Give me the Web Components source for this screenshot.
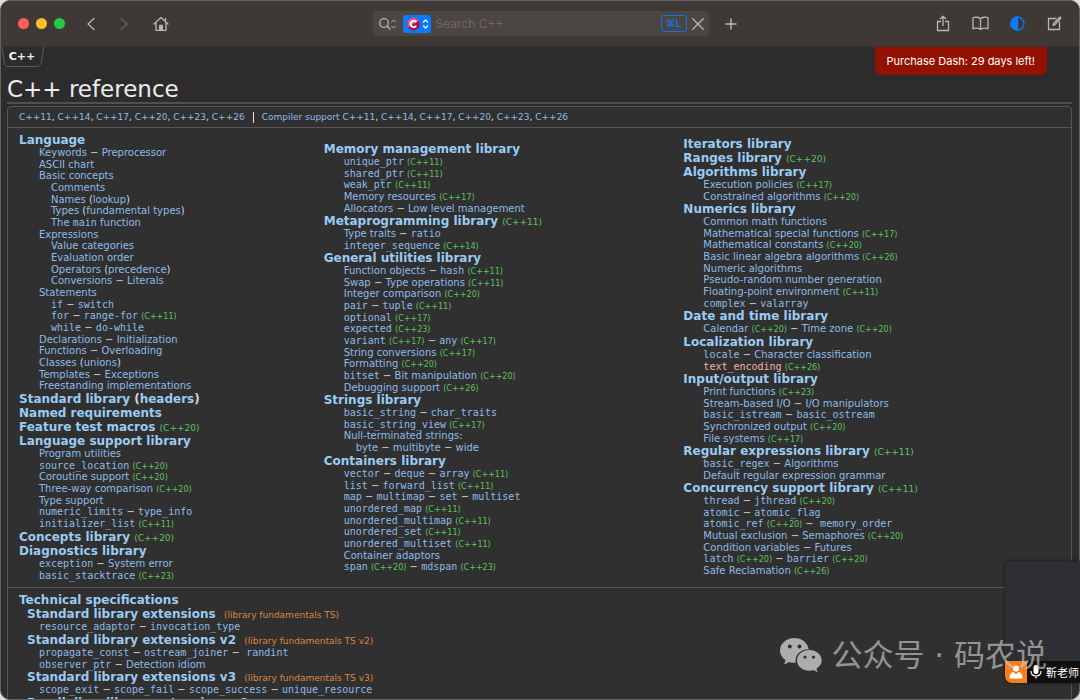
<!DOCTYPE html>
<html lang="en">
<head>
<meta charset="utf-8">
<title>C++ reference</title>
<style>
html { background: #dcdcdc; }
body { margin: 0; font-family: "DejaVu Sans", sans-serif; color: #e6e6e6; }
</style>
</head>
<body>
<dash-window>
  <tool-bar slot="bar"></tool-bar>
  <doc-tab slot="tab">C++</doc-tab>
  <purchase-banner slot="banner">Purchase Dash: 29 days left!</purchase-banner>
  <cpp-page>C++ reference</cpp-page>
</dash-window>
<call-tile>靳老师</call-tile>
<water-mark>公众号 · 码农说</water-mark>

<script>
const define = (name, html, setup) => customElements.define(name, class extends HTMLElement {
  constructor() {
    super();
    this.attachShadow({ mode: 'open' }).innerHTML = html;
    if (setup) setup(this.shadowRoot);
  }
});

define('dash-window', `
<style>
:host { display: flex; flex-direction: column; box-sizing: border-box; height: 100vh; overflow: hidden;
  border: 1px solid #626262; border-radius: 10px; background: #2c2c2c; position: relative; }
.top { display: flex; justify-content: space-between; align-items: flex-start; height: 29px; padding-right: 32px; }
</style>
<slot name="bar"></slot>
<div class="top"><slot name="tab"></slot><slot name="banner"></slot></div>
<slot></slot>`);

define('tool-bar', `
<style>
:host { display: flex; align-items: center; box-sizing: border-box; height: 46px; flex: none; background: #3f3936;
  border-bottom: 1px solid #352f2d; color: #b9b5b3; }
.side { flex: 1 1 0; display: flex; align-items: center; }
.left { padding-left: 17px; box-sizing: border-box; }
.end { flex-basis: 16px; }
.right { justify-content: flex-end; gap: 15px; padding-right: 14px; }
button { border: 0; padding: 0; background: none; color: inherit; display: flex; justify-content: center; align-items: center; font: inherit; }
.lights { display: flex; gap: 7px; margin-right: 14px; }
.lights button { width: 11px; height: 11px; border-radius: 50%; background: #ff5f57; }
.lights button:nth-child(2) { background: #febc2e; }
.lights button:nth-child(3) { background: #28c840; }
.nav { width: 24px; height: 24px; }
.fwd { margin-left: 9px; color: #67615f; }
.home { margin-left: 13px; }
svg { display: block; fill: none; stroke: currentColor; stroke-width: 1.3; stroke-linecap: round; stroke-linejoin: round; }
.field { display: flex; align-items: center; box-sizing: border-box; width: 336px; height: 25px; padding: 0 5px; border-radius: 4px; background: #4c4643; }
.doc { width: 28px; height: 18px; margin: 0 5px; border-radius: 3px; background: #087bfe; color: #fff; flex: none; }
input { flex: 1; min-width: 0; border: 0; padding: 0; background: none; outline: 0; color: #eee; font: 12px Inter, sans-serif; }
input::placeholder { color: #6e6865; opacity: 1; }
kbd { display: flex; align-items: center; justify-content: center; box-sizing: border-box; width: 26px; height: 17px; margin-right: 5px;
  border: 1px solid #0f75e8; border-radius: 3px; color: #0f75e8; font: 500 10px/15px Inter, "DejaVu Sans", sans-serif; }
.add { margin-left: 16px; }
.right button { width: 22px; height: 24px; }
</style>
<div class="side left">
  <div class="lights"><button aria-label="Close"></button><button aria-label="Minimise"></button><button aria-label="Zoom"></button></div>
  <button class="nav" aria-label="Back"><svg width="10" height="14"><path d="M8 1.500L2 7L8 12.500"/></svg></button>
  <button class="nav fwd" aria-label="Forward"><svg width="10" height="14"><path d="M2 1.500L8 7L2 12.500"/></svg></button>
  <button class="nav home" aria-label="Home"><svg width="16" height="16"><path d="M1 8L8 1.500L15 8M12.500 5.200V2.500M3 7V14.300H13V7"/><path d="M6.700 14V9.500H9.300V14Z" fill="currentColor"/></svg></button>
</div>
<search class="field">
  <svg width="20" height="16" aria-hidden="true"><circle cx="6" cy="7" r="4.300"/><path d="M9.200 10.200L12 13"/><path d="M13.500 6L15.500 4L17.500 6M13.500 10L15.500 12L17.500 10" stroke-width="1"/></svg>
  <button class="doc" aria-label="Choose docset"><svg width="26" height="16" stroke="none"><path d="M9.500 1L15.500 4.500V11.500L9.500 15L3.500 11.500V4.500Z" fill="#b0104a" stroke="none"/><path d="M9.500 1L15.500 4.500L9.500 8L3.500 11.500V4.500Z" fill="#dc5d86" stroke="none"/><path d="M12.200 6.200A3.100 3.100 0 1 0 12.200 9.800" stroke="#fff" stroke-width="1.900" stroke-linecap="butt"/><path d="M19.500 6L21.500 4L23.500 6M19.500 10L21.500 12L23.500 10" stroke="#fff" stroke-width="1.200"/></svg></button>
  <input type="text" placeholder="Search C++" aria-label="Search C++">
  <kbd>⌘L</kbd>
  <button aria-label="Clear"><svg width="12" height="12"><path d="M.7.7L11.300 11.300M11.300.7L.7 11.300"/></svg></button>
</search>
<div class="side end">
  <button class="add" aria-label="New tab"><svg width="12" height="12"><path d="M6 1V11M1 6H11" stroke-width="1.500"/></svg></button>
  <div class="side right">
    <button aria-label="Share"><svg width="14" height="17"><path d="M4.500 6.500H1.500V15.500H12.500V6.500H9.500M7 10.500V1.300M4.300 3.800L7 1.200L9.700 3.800"/></svg></button>
    <button aria-label="Bookmarks"><svg width="17" height="15"><path d="M8.500 2.800C7 1 3 .8 1 1.800V12.800C3 11.800 7 12 8.500 13.600C10 12 14 11.800 16 12.800V1.800C14 .8 10 1 8.500 2.800ZM8.500 2.800V13.500"/></svg></button>
    <button aria-label="Appearance" style="color:#087bfe"><svg width="15" height="15"><circle cx="7.500" cy="7.500" r="6.500"/><path d="M7.500 1A6.500 6.500 0 0 0 7.500 14Z" fill="currentColor"/></svg></button>
    <button aria-label="Annotate"><svg width="15" height="15"><path d="M9 2.500H1.500V13.500H12.500V6M6 9.300L6.500 7.500L13 1L14 2L7.700 8.700Z"/></svg></button>
  </div>
</div>`);

define('doc-tab', `
<style>
:host { display: block; }
button { position: relative; display: block; width: 42px; height: 20px; margin: 0; padding: 0 0 1px; border: 0; background: none; color: #f0f0f0; font: bold 11px/18px "DejaVu Sans", sans-serif; }
svg { position: absolute; inset: 0; fill: none; stroke: #5a5a5a; }
</style>
<button><svg width="44" height="20"><path d="M1 0L3 15Q3.500 19.500 7 19.500H35Q39.500 19.500 40.500 15L42.500 0"/></svg><slot></slot></button>`);

define('purchase-banner', `
<style>
:host { display: block; }
button { display: block; height: 28px; padding: 0 12px; border: 0; border-radius: 0 0 6px 6px; background: #921100; color: #fff; font: 11px/28px Inter, sans-serif; }
</style>
<button><slot></slot></button>`);

const left = [
  ['Language', `Keywords − Preprocessor
ASCII chart
Basic concepts
 Comments
 Names (lookup)
 Types (fundamental types)
 The \`main\` function
Expressions
 Value categories
 Evaluation order
 Operators (precedence)
 Conversions − Literals
Statements
 \`if\` − \`switch\`
 \`for\` − \`range-for\` (C++11)
 \`while\` − \`do-while\`
Declarations − Initialization
Functions − Overloading
Classes (unions)
Templates − Exceptions
Freestanding implementations`],
  ['Standard library (headers)'],
  ['Named requirements'],
  ['Feature test macros (C++20)'],
  ['Language support library', `Program utilities
\`source_location\` (C++20)
Coroutine support (C++20)
Three-way comparison (C++20)
Type support
\`numeric_limits\` − \`type_info\`
\`initializer_list\` (C++11)`],
  ['Concepts library (C++20)'],
  ['Diagnostics library', `\`exception\` − System error
\`basic_stacktrace\` (C++23)`]
];
const middle = [
  ['Memory management library', `\`unique_ptr\` (C++11)
\`shared_ptr\` (C++11)
\`weak_ptr\` (C++11)
Memory resources (C++17)
Allocators − Low level management`],
  ['Metaprogramming library (C++11)', `Type traits − \`ratio\`
\`integer_sequence\` (C++14)`],
  ['General utilities library', `Function objects − \`hash\` (C++11)
Swap − Type operations (C++11)
Integer comparison (C++20)
\`pair\` − \`tuple\` (C++11)
\`optional\` (C++17)
\`expected\` (C++23)
\`variant\` (C++17) − \`any\` (C++17)
String conversions (C++17)
Formatting (C++20)
\`bitset\` − Bit manipulation (C++20)
Debugging support (C++26)`],
  ['Strings library', `\`basic_string\` − \`char_traits\`
\`basic_string_view\` (C++17)
Null-terminated strings:
 byte − multibyte − wide`],
  ['Containers library', `\`vector\` − \`deque\` − \`array\` (C++11)
\`list\` − \`forward_list\` (C++11)
\`map\` − \`multimap\` − \`set\` − \`multiset\`
\`unordered_map\` (C++11)
\`unordered_multimap\` (C++11)
\`unordered_set\` (C++11)
\`unordered_multiset\` (C++11)
Container adaptors
\`span\` (C++20) − \`mdspan\` (C++23)`]
];
const right = [
  ['Iterators library'],
  ['Ranges library (C++20)'],
  ['Algorithms library', `Execution policies (C++17)
Constrained algorithms (C++20)`],
  ['Numerics library', `Common math functions
Mathematical special functions (C++17)
Mathematical constants (C++20)
Basic linear algebra algorithms (C++26)
Numeric algorithms
Pseudo-random number generation
Floating-point environment (C++11)
\`complex\` − \`valarray\``],
  ['Date and time library', `Calendar (C++20) − Time zone (C++20)`],
  ['Localization library', `\`locale\` − Character classification
!\`text_encoding\` (C++26)`],
  ['Input/output library', `Print functions (C++23)
Stream-based I/O − I/O manipulators
\`basic_istream\` − \`basic_ostream\`
Synchronized output (C++20)
File systems (C++17)`],
  ['Regular expressions library (C++11)', `\`basic_regex\` − Algorithms
Default regular expression grammar`],
  ['Concurrency support library (C++11)', `\`thread\` − \`jthread\` (C++20)
\`atomic\` − \`atomic_flag\`
\`atomic_ref\` (C++20) − \u00a0\`memory_order\`
Mutual exclusion − Semaphores (C++20)
Condition variables − Futures
\`latch\` (C++20) − \`barrier\` (C++20)
Safe Reclamation (C++26)`]
];
const specs = [
  ['Technical specifications'],
  ['Standard library extensions {library fundamentals TS}', `\`resource_adaptor\` − \`invocation_type\``],
  ['Standard library extensions v2 {library fundamentals TS v2}', `\`propagate_const\` − \`ostream_joiner\` − \u00a0\`randint\`
\`observer_ptr\` − Detection idiom`],
  ['Standard library extensions v3 {library fundamentals TS v3}', `\`scope_exit\` − \`scope_fail\` − \`scope_success\` − \`unique_resource\``],
  ['Parallelism library extensions v2']
];

// Turns one line of the index into links, version marks and separators.
const line = text => {
  const missing = text.startsWith('!');
  return text.replace('!', '').split(/(\s?−\s\u00a0?|\s?\(C\+\+\d\d\)|\s\{.*\}|\s?\(|\)|:|,\s)/).filter(Boolean).map(t => {
    if (/^\s?\(C/.test(t)) return ' <small>' + t.trim() + '</small>';
    if (/^\s\{/.test(t)) return ' &nbsp;<small class="ts">(' + t.slice(2, -1) + ')</small>';
    if (/^(\s?−|\s?\(|\)|:|,)/.test(t)) return t;
    if (!t.trim()) return t;
    return `<a href="#"${missing ? ' class="new"' : ''}>` + t.replace(/`(.+?)`/g, '<code>$1</code>') + '</a>';
  }).join('');
};

class CppSection extends HTMLElement {
  constructor() {
    super();
    this.attachShadow({ mode: 'open' });
  }
  set data([title, items]) {
    this.shadowRoot.innerHTML = `
<style>
:host { display: block; font-size: 10px; white-space: nowrap; color: #d8d8d8; }
h2 { margin: 0; font-size: 12px; line-height: 14px; font-weight: bold; }
ul { margin: 0; padding: 0 0 0 var(--indent, 20px); list-style: none; }
li { line-height: 12px; height: 12px; }
li:nth-child(3n+2) { line-height: 11px; height: 11px; }
.sub { padding-left: 12px; }
a { color: #8ebbe8; text-decoration: none; }
h2 a { color: #9acbf2; }
a.new { color: #f2b0b0; }
code { font: 10px "DejaVu Sans Mono", monospace; line-height: 1px; }
small { font-size: 8px; font-weight: normal; color: #5fc35f; line-height: 1px; }
h2 small { font-size: 9px; }
small.ts { color: #dd853c; }
</style>
<h2>${line(title)}</h2>` + (items ? '<ul>' + items.split('\n').map(i =>
      `<li${i.startsWith(' ') ? ' class="sub"' : ''}>${line(i.trim())}</li>`).join('') + '</ul>' : '');
  }
}
customElements.define('cpp-section', CppSection);

define('cpp-page', `
<style>
:host { display: block; flex: 1; min-height: 0; padding: 0 7px 0 6px; }
h1 { margin: 0 0 2px; border-bottom: 2px solid #505050; font-size: 23px; line-height: 26px; font-weight: normal; color: #ececec; }
.table { border: 1px solid #555; border-radius: 4px 4px 0 0; background: #303030; height: 100vh; }
nav { display: flex; align-items: center; height: 20px; padding: 0 11px; border-bottom: 1px solid #555; font-size: 9px; }
nav span + span { margin-left: 8px; padding-left: 8px; border-left: 1px solid #e6e6e6; line-height: 11px; }
nav a { color: #8ebbe8; text-decoration: none; }
.cols { display: grid; grid-template-columns: 305fr 360fr 377fr; align-items: center; padding: 5px 11px 6px; border-bottom: 1px solid #555; }
.specs { padding: 5px 11px; --indent: 12px; }
.specs cpp-section + cpp-section { margin-left: 8px; }
</style>
<h1><slot></slot></h1>
<div class="table">
  <nav></nav>
  <div class="cols"><div></div><div></div><div></div></div>
  <div class="specs"></div>
</div>`, root => {
  const fill = (box, list) => list.forEach(d => {
    const s = document.createElement('cpp-section');
    s.data = d;
    box.append(s);
  });
  const versions = 'C++11, C++14, C++17, C++20, C++23, C++26';
  const versionLinks = versions.split(', ').map(v => `<a href="#">${v}</a>`).join(', ');
  root.querySelector('nav').innerHTML = `<span>${versionLinks}</span><span><a href="#">Compiler support</a> ${versionLinks}</span>`;
  const cols = root.querySelectorAll('.cols > div');
  [left, middle, right].forEach((l, i) => fill(cols[i], l));
  fill(root.querySelector('.specs'), specs);
});

define('call-tile', `
<style>
:host { position: absolute; right: 0; bottom: 17px; display: flex; flex-direction: column; justify-content: flex-end; width: 75px; height: 122px;
  border-radius: 7px 0 0 7px; overflow: hidden; background: #2e2f33; box-shadow: 0 0 3px #111; }
div { display: flex; align-items: center; background: #101010; height: 22px; color: #fff; font: 11px/22px "Noto Sans CJK SC", sans-serif; white-space: nowrap; }
svg { flex: none; }
.mic { margin: 0 4px 0 3px; }
</style>
<div>
  <svg width="22" height="22"><rect width="22" height="22" fill="#fa7d1c"/><circle cx="11" cy="7.500" r="3" fill="#fff"/><path d="M4.500 17.500Q4.500 11.500 8.500 11L11 13.500L13.500 11Q17.500 11.500 17.500 17.500Z" fill="#fff"/></svg>
  <svg class="mic" width="12" height="16"><rect x="3.500" y="1" width="5" height="9" rx="2.500" fill="#fff"/><path d="M1 7Q1 12 6 12Q11 12 11 7M6 12V14.500" fill="none" stroke="#fff" stroke-width="1.200"/></svg>
  <slot></slot>
</div>`);

define('water-mark', `
<style>
:host { position: absolute; right: 33px; bottom: 23px; display: flex; align-items: center; gap: 9px; color: #c8c8c8; opacity: .65;
  font: 31px/44px "DejaVu Sans", "Noto Sans CJK SC", sans-serif; white-space: nowrap; pointer-events: none; }
</style>
<svg width="42" height="36" viewBox="0 0 42 36"><path fill="#f0f0f0" fill-rule="evenodd" d="M14.500 1C6.500 1 0 6.500 0 13.500C0 17.500 2.200 20.800 5.500 23L4.200 27.500L9.200 24.900C11.400 25.600 13.500 25.800 15.800 25.700C14 18.500 20.500 12 28.800 12.200C27.500 5.500 21.500 1 14.500 1ZM9.800 7.500A2 2 0 1 1 9.800 11.500A2 2 0 1 1 9.800 7.500ZM19.500 7.500A2 2 0 1 1 19.500 11.500A2 2 0 1 1 19.500 7.500Z"/><path fill="#f0f0f0" fill-rule="evenodd" d="M29.300 13C22.500 13 17 17.600 17 23.500C17 29.300 22.500 33.800 29.300 33.800C30.800 33.800 32.200 33.500 33.500 33.100L37.500 35.200L36.500 31.600C39.500 29.700 41.700 26.800 41.700 23.500C41.700 17.600 36.200 13 29.300 13ZM25 18.500A1.600 1.600 0 1 1 25 21.700A1.600 1.600 0 1 1 25 18.500ZM33.500 18.500A1.600 1.600 0 1 1 33.500 21.700A1.600 1.600 0 1 1 33.500 18.500Z"/></svg>
<span><slot></slot></span>`);
</script>
</body>
</html>
